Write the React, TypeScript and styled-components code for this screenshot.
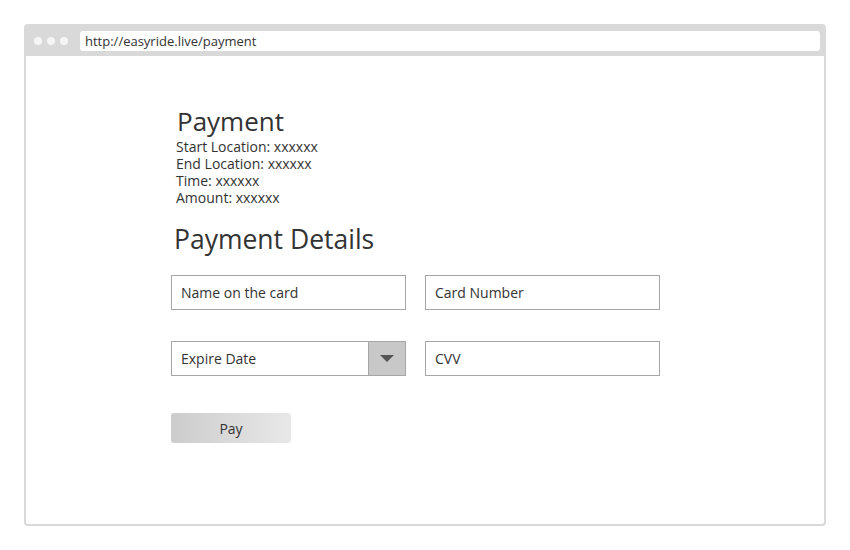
import styled, { createGlobalStyle } from "styled-components";

const GlobalStyle = createGlobalStyle`
  html, body {
    margin: 0;
    padding: 0;
    background: #ffffff;
    font-family: "Open Sans", "Noto Sans", sans-serif;
    color: #333333;
  }
`;

const Page = styled.div`
  width: 850px;
  height: 550px;
  padding: 24px;
  box-sizing: border-box;
`;

const Window = styled.div`
  height: 502px;
  border: 2px solid #d9d9d9;
  border-radius: 4px;
  display: flex;
  flex-direction: column;
  box-sizing: border-box;
`;

const TitleBar = styled.div`
  height: 30px;
  background: #d9d9d9;
  display: flex;
  align-items: center;
  padding: 0 4px 0 8px;
  gap: 5px;
`;

const Dot = styled.span`
  width: 8px;
  height: 8px;
  border-radius: 50%;
  background: #f5f5f5;
`;

const Address = styled.div`
  flex: 1;
  height: 20px;
  margin-left: 7px;
  background: #ffffff;
  border-radius: 3px;
  display: flex;
  align-items: center;
  padding-left: 5px;
  font-size: 13px;
  color: #333333;
`;

const Content = styled.main`
  flex: 1;
  padding: 48px 0 0 145px;
  display: flex;
  flex-direction: column;
`;

const Title = styled.h1`
  margin: 0 0 0 6px;
  font-size: 26px;
  font-weight: 400;
  line-height: 34px;
`;

const Info = styled.div`
  margin-left: 5px;
  font-size: 14px;
`;

const InfoLine = styled.div`
  height: 17px;
  line-height: 17px;
`;

const SubTitle = styled.h2`
  margin: 16px 0 0 3px;
  font-size: 26.5px;
  font-weight: 400;
  line-height: 34px;
`;

const Grid = styled.div`
  margin-top: 19px;
  display: grid;
  grid-template-columns: 235px 235px;
  column-gap: 19px;
  row-gap: 31px;
`;

const Field = styled.div`
  height: 35px;
  border: 1px solid #a6a6a6;
  box-sizing: border-box;
  display: flex;
  align-items: center;
  font-size: 14px;
  color: #333333;
`;

const FieldText = styled.span`
  flex: 1;
  padding-left: 9px;
`;

const DropButton = styled.span`
  width: 36px;
  height: 100%;
  background: #c8c8c8;
  border-left: 1px solid #a6a6a6;
  display: flex;
  align-items: center;
  justify-content: center;
`;

const Arrow = styled.span`
  width: 0;
  height: 0;
  border-left: 7px solid transparent;
  border-right: 7px solid transparent;
  border-top: 7px solid #555555;
`;

const PayButton = styled.button`
  margin-top: 37px;
  width: 120px;
  height: 30px;
  border: none;
  border-radius: 3px;
  background: linear-gradient(90deg, #cccccc, #e8e8e8);
  font-family: inherit;
  font-size: 14px;
  color: #333333;
  padding: 0;
`;

const details = [
  "Start Location: xxxxxx",
  "End Location: xxxxxx",
  "Time: xxxxxx",
  "Amount: xxxxxx",
];

export default function App() {
  return (
    <Page>
      <GlobalStyle />
      <Window>
        <TitleBar>
          <Dot />
          <Dot />
          <Dot />
          <Address>http://easyride.live/payment</Address>
        </TitleBar>
        <Content>
          <Title>Payment</Title>
          <Info>
            {details.map((d) => (
              <InfoLine key={d}>{d}</InfoLine>
            ))}
          </Info>
          <SubTitle>Payment Details</SubTitle>
          <Grid>
            <Field>
              <FieldText>Name on the card</FieldText>
            </Field>
            <Field>
              <FieldText>Card Number</FieldText>
            </Field>
            <Field>
              <FieldText>Expire Date</FieldText>
              <DropButton>
                <Arrow />
              </DropButton>
            </Field>
            <Field>
              <FieldText>CVV</FieldText>
            </Field>
          </Grid>
          <div>
            <PayButton>Pay</PayButton>
          </div>
        </Content>
      </Window>
    </Page>
  );
}
